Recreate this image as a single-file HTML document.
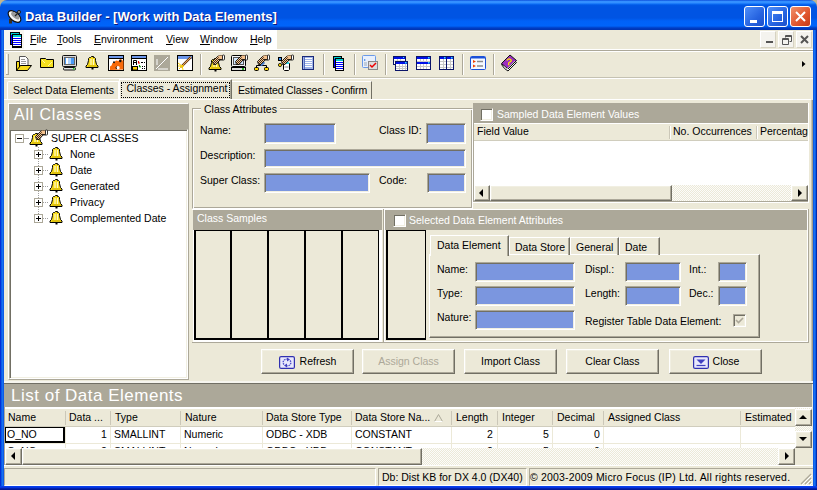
<!DOCTYPE html>
<html><head><meta charset="utf-8">
<style>
*{box-sizing:border-box;margin:0;padding:0}
html,body{width:817px;height:490px;overflow:hidden;background:#ece9d8}
body{position:relative;font-family:"Liberation Sans",sans-serif;font-size:11px;color:#000}
.a{position:absolute}
.t{position:absolute;white-space:nowrap;line-height:13px;font-size:10.5px}
.sunk{position:absolute;background:#7b96df;border:1px solid;border-color:#aca899 #fff #fff #aca899;box-shadow:inset 1px 1px #716f64,inset -1px -1px #f1efe2}
.btn{position:absolute;background:#ece9d8;border:1px solid;border-color:#fff #716f64 #716f64 #fff;box-shadow:inset -1px -1px #aca899,inset 1px 1px #f1efe2;text-align:center;line-height:22px;font-size:10.5px}
.hdr{position:absolute;background:#aca899;color:#fff}
.cb{position:absolute;width:13px;height:13px;background:#fff;border:1px solid;border-color:#aca899 #fff #fff #aca899;box-shadow:inset 1px 1px #716f64,inset -1px -1px #f1efe2}
.tab{position:absolute;border:1px solid;border-bottom:none;border-color:#fff #716f64 #716f64 #fff;box-shadow:inset -1px 0 #aca899;height:19px;line-height:17px;padding-left:5px;font-size:10.5px;white-space:nowrap}
.vl{position:absolute;width:1px;background:#aca899}
.hl{position:absolute;height:1px;background:#aca899}
.wl{position:absolute;background:#fff}
</style></head><body>

<!-- window frame -->
<div class="a" style="left:0;top:0;width:817px;height:490px;background:#0831d9"></div>
<div class="a" style="left:0;top:0;width:8px;height:8px;background:#c3b58e"></div><div class="a" style="left:809px;top:0;width:8px;height:8px;background:#c3b58e"></div>
<div class="a" style="left:0;top:0;width:817px;height:30px;border-radius:7px 7px 0 0;background:linear-gradient(#0a3fd0 0px,#2b8aff 1px,#3d95ff 2px,#2b8aff 3px,#0f6ff5 4px,#0058e6 5px,#0054e3 7px,#0054e3 18px,#0062f8 21px,#0064fa 26px,#0050dd 27px,#003dc4 28px,#0033b0 30px)"></div>
<div class="a" style="left:0;top:30px;width:4px;height:460px;background:linear-gradient(90deg,#0019cf 0px,#0a5ae8 1.5px,#1670f0 2.5px,#0a50e0 4px)"></div>
<div class="a" style="left:813px;top:30px;width:4px;height:460px;background:linear-gradient(90deg,#0a50e0 0px,#1670f0 1.5px,#0a5ae8 2.5px,#00138a 4px)"></div>
<div class="a" style="left:0;top:486px;width:817px;height:4px;background:linear-gradient(#0844f5 0px,#0636e0 1.5px,#0322b0 2.5px,#00138a 4px)"></div>

<!-- title -->
<svg class="a" style="left:6px;top:6px" width="17" height="19" viewBox="0 0 17 19">
 <path d="M3 13h3v4.5h-3z" fill="#3a3020"/>
 <ellipse cx="8.5" cy="10.5" rx="7.5" ry="4.2" transform="rotate(40 8.5 10.5)" fill="#f4f4f4" stroke="#111" stroke-width="1.2"/>
 <ellipse cx="9.3" cy="9.7" rx="5" ry="2.3" transform="rotate(40 9.3 9.7)" fill="#9a9a9a"/>
 <path d="M9 10L12.5 6.5" stroke="#222" stroke-width="1.3"/>
 <circle cx="13" cy="6" r="1.6" fill="#888" stroke="#111" stroke-width="0.8"/>
</svg>
<div class="t" style="left:25px;top:9px;color:#fff;font-weight:bold;font-size:13px;letter-spacing:0;line-height:15px;text-shadow:1px 1px #0a1883">Data Builder - [Work with Data Elements]</div>

<!-- caption buttons -->
<div class="a" style="left:744px;top:6px;width:21px;height:21px;border:1px solid #fff;border-radius:3px;background:linear-gradient(135deg,#4f8ff9,#2663e0 60%,#1b50cb)"><div class="a" style="left:5px;top:13px;width:7px;height:3px;background:#fff"></div></div>
<div class="a" style="left:767px;top:6px;width:21px;height:21px;border:1px solid #fff;border-radius:3px;background:linear-gradient(135deg,#4f8ff9,#2663e0 60%,#1b50cb)"><div class="a" style="left:4px;top:4px;width:11px;height:11px;border:1px solid #fff;border-top-width:3px"></div></div>
<div class="a" style="left:790px;top:6px;width:21px;height:21px;border:1px solid #fff;border-radius:3px;background:linear-gradient(135deg,#f0906a,#e0542c 60%,#c33a18)">
 <svg class="a" style="left:3px;top:3px" width="13" height="13"><path d="M2 2 L11 11 M11 2 L2 11" stroke="#fff" stroke-width="2"/></svg></div>

<!-- client area -->
<div class="a" style="left:4px;top:30px;width:809px;height:456px;background:#ece9d8"></div>

<!-- menu bar -->
<div class="a" style="left:4px;top:30px;width:273px;height:19px;background:#fff"></div>
<div class="a" style="left:4px;top:30px;width:20px;height:19px;background:#f7f6f0"></div>
<svg class="a" style="left:10px;top:32px" width="12" height="16" viewBox="0 0 12 16">
 <rect x="0.5" y="0.5" width="9" height="12" fill="#00f" stroke="#000"/>
 <rect x="1" y="1" width="8" height="2" fill="#0cc"/>
 <rect x="2.5" y="2.5" width="9" height="13" fill="#fff" stroke="#000"/>
 <rect x="3" y="3" width="8" height="2" fill="#0cc"/>
 <path d="M3 6.5h8M3 8.5h8M3 10.5h8M3 12.5h8" stroke="#00f"/>
 <rect x="2" y="14" width="10" height="2" fill="#000"/>
</svg>
<div class="t" style="left:30px;top:33px"><u>F</u>ile</div>
<div class="t" style="left:57px;top:33px"><u>T</u>ools</div>
<div class="t" style="left:94px;top:33px"><u>E</u>nvironment</div>
<div class="t" style="left:166px;top:33px"><u>V</u>iew</div>
<div class="t" style="left:200px;top:33px"><u>W</u>indow</div>
<div class="t" style="left:250px;top:33px"><u>H</u>elp</div>
<!-- mdi buttons -->
<div class="a" style="left:760px;top:31px;width:16px;height:17px;background:#f4f3ee;border:1px solid #fff;border-color:#fff #d6d2c2 #d6d2c2 #fff"><div class="a" style="left:5px;top:9px;width:7px;height:2px;background:#555"></div></div>
<div class="a" style="left:778px;top:31px;width:16px;height:17px;background:#f4f3ee;border:1px solid #fff;border-color:#fff #d6d2c2 #d6d2c2 #fff">
 <svg class="a" style="left:3px;top:3px" width="10" height="10"><path d="M3.5 0.5h6v6h-2M3.5 0.5v2M0.5 3.5h6v6h-6z M0.5 4.5h6M3.5 1.5h6" stroke="#555" fill="none"/></svg></div>
<div class="a" style="left:796px;top:31px;width:16px;height:17px;background:#f4f3ee;border:1px solid #fff;border-color:#fff #d6d2c2 #d6d2c2 #fff">
 <svg class="a" style="left:3px;top:3px" width="10" height="10"><path d="M1 1L8 8M8 1L1 8" stroke="#555" stroke-width="2"/></svg></div>
<div class="wl" style="left:4px;top:49px;width:809px;height:1px"></div>
<div class="hl" style="left:4px;top:50px;width:809px;background:#aca899"></div>
<div class="wl" style="left:4px;top:51px;width:809px;height:1px"></div>

<!-- toolbar -->
<div class="a" style="left:6px;top:54px;width:3px;height:21px;border-left:1px solid #fff;border-right:1px solid #aca899;background:#ece9d8"></div>
<div class="hl" style="left:4px;top:77px;width:809px;background:#c5c2b2"></div>
<div class="wl" style="left:4px;top:78px;width:809px;height:1px"></div>
<svg class="a" style="left:0;top:0" width="530" height="80" viewBox="0 0 530 80">
<defs>
 <symbol id="bell" viewBox="0 0 13 13" overflow="visible">
  <path d="M5.5 0.5h2v1h1l1 1v2l1 4 1.5 1.5v1.5h-12v-1.5l1.5-1.5 1-4v-2l1-1h1z" fill="#f8dc1c" stroke="#000" stroke-linejoin="round"/>
  <path d="M5 3v6M7.5 3v6" stroke="#fff9c8" stroke-width="1.2"/>
  <path d="M2 10h9" stroke="#c8a800"/>
  <rect x="5.5" y="12" width="2" height="1.5" fill="#000"/>
 </symbol>
 <pattern id="chk" width="2" height="2" patternUnits="userSpaceOnUse"><rect width="2" height="2" fill="#f6c38e"/><rect width="1" height="1" fill="#3a2a1a"/><rect x="1" y="1" width="1" height="1" fill="#3a2a1a"/></pattern>
 <symbol id="hand" viewBox="0 0 13 10" overflow="visible">
  <path d="M0.5 6.5l5-5 2-1h3.5v4.5h-3l-4 4.5h-2.5z" fill="url(#chk)" stroke="#000" stroke-width="0.8"/>
  <path d="M6 1l1.5-0.5h3.5v4h-3.5z" fill="#f6c38e"/>
  <path d="M7 4.5h3.5" stroke="#000" stroke-width="0.8"/>
  <rect x="10.5" y="0" width="2" height="5" rx="0.8" fill="#fff" stroke="#000" stroke-width="0.8"/>
 </symbol>
</defs>
<!-- grip -->
<rect x="6" y="54" width="1" height="21" fill="#fff"/><rect x="8" y="54" width="1" height="21" fill="#aca899"/><rect x="6" y="74" width="3" height="1" fill="#aca899"/>
<!-- 1 open folder -->
<path d="M19.5 56.5h6l2.5 2.5v6.5h-8.5z" fill="#fff" stroke="#555"/>
<path d="M21 59.5h4M21 61.5h5M21 63.5h5" stroke="#999"/>
<path d="M16.5 61.5h3v9h-3z" fill="#f8dc1c" stroke="#000"/>
<path d="M16.5 70.5l4-5h11l-4 5z" fill="#f8dc1c" stroke="#000"/>
<!-- 2 folder -->
<path d="M40.5 58.5h5l1 1h7v8h-13z" fill="#f5e01e" stroke="#000"/>
<path d="M42 60l3 3M48 66l4-4" stroke="#fff6a0"/>
<!-- 3 monitor -->
<rect x="62.5" y="55.5" width="14" height="11" rx="1" fill="#d8d8d8" stroke="#111"/>
<rect x="64.5" y="57.5" width="10" height="7" fill="#4a9af5" stroke="#666"/>
<rect x="66" y="58" width="2" height="6" fill="#fff"/><rect x="68" y="58" width="3" height="6" fill="#b0d4ff"/>
<rect x="63.5" y="67.5" width="12" height="2.5" rx="1" fill="#e0e0e0" stroke="#111"/>
<rect x="73" y="68" width="1.5" height="1.5" fill="#2c2"/>
<!-- 4 bell -->
<use href="#bell" x="86" y="56" width="13" height="13"/>
<!-- 5 puzzle window -->
<rect x="108.5" y="55.5" width="15" height="15" fill="#fff" stroke="#000"/>
<rect x="109" y="56" width="14" height="2" fill="#6f98ea"/><rect x="109" y="58" width="14" height="1" fill="#000"/>
<path d="M110 70v-3.5l1.5-1 1-2.5 2-1 1.5-1.5 2.5 0.5 1-1.5 1.5-0.5 1.5 1.5 1 0v9z" fill="#f86a08"/>
<circle cx="114" cy="62.3" r="1" fill="#111"/><circle cx="120.3" cy="61" r="1.2" fill="#111"/>
<circle cx="118" cy="67.8" r="1.7" fill="#fff"/><path d="M116.5 66.5a2 2 0 0 0 0 2.5" stroke="#111" fill="none"/>
<!-- 6 form window -->
<rect x="131.5" y="55.5" width="15" height="15" fill="#fff" stroke="#000"/>
<rect x="132" y="56" width="14" height="2" fill="#6f98ea"/><rect x="132" y="58" width="14" height="1" fill="#000"/>
<path d="M133.5 65V60.5h3V65M134 62.5h2" stroke="#000" fill="none"/>
<rect x="132.5" y="66.5" width="5" height="3.5" fill="#ffd000" stroke="#000"/>
<path d="M138.5 61v2h1.5" stroke="#e00000" stroke-width="1.1" fill="none"/><path d="M139.5 65v1.8h1.5" stroke="#00a000" stroke-width="1.1" fill="none"/>
<path d="M141 62.5h2M144 62.5h1M142 66.5h1M144 66.5h1M142 68.5h1M144 68.5h1" stroke="#000"/>
<!-- 7 disabled -->
<rect x="154" y="55" width="16" height="16" fill="#aca899"/>
<path d="M156 69l12-12M158 69h10M157 59v6" stroke="#fff" stroke-width="1"/>
<!-- 8 wand window -->
<rect x="177.5" y="55.5" width="15" height="15" fill="#fff" stroke="#000"/>
<rect x="178" y="56" width="14" height="3" fill="#6b95e8"/>
<path d="M181 67l10-10" stroke="#6a3a10" stroke-width="2.4"/><path d="M181 67l10-10" stroke="#e0a060" stroke-width="1"/>
<path d="M178 63l4 3M179 69l3-3M182 65l1 5M178 66h6" stroke="#ffd400" stroke-width="1"/>
<!-- sep -->
<rect x="200" y="54" width="1" height="21" fill="#aca899"/><rect x="201" y="54" width="1" height="21" fill="#fff"/>
<!-- 9 hand bell -->
<use href="#bell" x="209" y="58" width="13" height="13"/>
<use href="#hand" x="212" y="55" width="13" height="10"/>
<!-- 10 hand monitor -->
<rect x="231.5" y="55.5" width="14" height="11" rx="1" fill="#f4f4f4" stroke="#000"/>
<rect x="233.5" y="57.5" width="10" height="7" fill="#d4eaff" stroke="#555"/>
<rect x="231.5" y="67.5" width="14" height="3" fill="#ddd" stroke="#000"/><rect x="242" y="68" width="2" height="2" fill="#2a2"/>
<use href="#hand" x="235" y="55" width="13" height="10"/>
<!-- 11 hand hierarchy -->
<path d="M256.5 68v-2.5h10v2.5" stroke="#000" fill="none"/>
<path d="M261.5 65.5v-1" stroke="#000"/>
<rect x="254.5" y="67.5" width="4" height="3" rx="1" fill="#ffd800" stroke="#000"/>
<rect x="264.5" y="67.5" width="4" height="3" rx="1" fill="#ffd800" stroke="#000"/>
<path d="M258.5 63l3-3 3 3-3 3z" fill="#5aa8ff" stroke="#1a50c0" stroke-width="0.8"/>
<use href="#hand" x="257" y="55" width="13" height="10"/>
<!-- 12 hand db -->
<rect x="278.5" y="57.5" width="3" height="3" fill="#3a90f0" stroke="#000"/>
<circle cx="280" cy="65" r="1.6" fill="#ffd800" stroke="#000" stroke-width="0.8"/>
<path d="M283.5 63.5h6v6l-1 1h-4l-1-1z" fill="#fff" stroke="#000"/><rect x="284" y="62" width="5" height="2" fill="#30e0f0"/>
<path d="M284.5 67h4" stroke="#888"/>
<use href="#hand" x="281" y="55" width="13" height="10"/>
<!-- 13 list doc -->
<rect x="302.5" y="56.5" width="11" height="13" fill="#9fb4e8" stroke="#1a2a7a"/>
<path d="M304 58.5h8M304 60.5h8M304 62.5h8M304 64.5h8M304 66.5h8" stroke="#fff"/><path d="M304.5 57v12" stroke="#5a70c0"/>
<!-- sep -->
<rect x="323" y="54" width="1" height="21" fill="#aca899"/><rect x="324" y="54" width="1" height="21" fill="#fff"/>
<!-- 14 doc stack -->
<rect x="333.5" y="56.5" width="8" height="11" fill="#00f" stroke="#000"/><rect x="334" y="57" width="7" height="2" fill="#0cc"/>
<rect x="335.5" y="58.5" width="8" height="12" fill="#fff" stroke="#000"/><rect x="336" y="59" width="7" height="2" fill="#0cc"/>
<path d="M336 62.5h7M336 64.5h7M336 66.5h7M336 68.5h7" stroke="#00f"/>
<!-- sep -->
<rect x="354" y="54" width="1" height="21" fill="#aca899"/><rect x="355" y="54" width="1" height="21" fill="#fff"/>
<!-- 15 checklist -->
<rect x="362.5" y="55.5" width="13" height="12" rx="1" fill="#e8f0fc" stroke="#6a9ae8"/>
<path d="M364 59l2 1-2 1z" fill="#3a80e0"/><path d="M364 63h3M364 65h3" stroke="#9ab"/>
<rect x="368.5" y="61.5" width="9" height="8" fill="#ddd" stroke="#888"/>
<path d="M370 65l2 2 4-4" stroke="#e00" stroke-width="1.5" fill="none"/>
<!-- sep -->
<rect x="385" y="54" width="1" height="21" fill="#aca899"/><rect x="386" y="54" width="1" height="21" fill="#fff"/>
<!-- 16 table1 -->
<rect x="393.5" y="56.5" width="12" height="8" fill="#fff" stroke="#0a1468"/><rect x="394" y="57" width="11" height="2" fill="#0010e8"/><rect x="403" y="57" width="1" height="1" fill="#30e0ff"/>
<path d="M394 61h11M397.5 59v5M400.5 59v5" stroke="#c8c8c8"/>
<rect x="395.5" y="61.5" width="12" height="9" fill="#fff" stroke="#0a1468"/><rect x="396" y="62" width="11" height="2" fill="#0010e8"/><rect x="405" y="62" width="1.5" height="1.5" fill="#30e0ff"/>
<path d="M396 66.5h11M396 68.5h11M399.5 64v6M402.5 64v6M405.5 64v6" stroke="#c8c8c8"/>
<!-- 17 table2 -->
<rect x="416.5" y="56.5" width="14" height="13" fill="#fff" stroke="#0a1468"/>
<rect x="417" y="57" width="13" height="2" fill="#0010e8"/><rect x="417" y="62" width="13" height="2" fill="#0010e8"/>
<rect x="428" y="57" width="1.5" height="1.5" fill="#30e0ff"/><rect x="428" y="62" width="1.5" height="1.5" fill="#30e0ff"/>
<path d="M417 61.5h13M417 66.5h13M420.5 59v3M423.5 59v3M426.5 59v3M420.5 64v5M423.5 64v5M426.5 64v5" stroke="#c8c8c8"/>
<!-- 18 table3 -->
<rect x="439.5" y="56.5" width="14" height="13" fill="#fff" stroke="#0a1468"/>
<rect x="440" y="57" width="13" height="2" fill="#0010e8"/><path d="M446.5 57v12" stroke="#0a1468"/>
<rect x="444" y="57" width="1.5" height="1.5" fill="#30e0ff"/><rect x="451" y="57" width="1.5" height="1.5" fill="#30e0ff"/>
<path d="M440 61.5h6M447 61.5h6M440 64.5h6M447 64.5h6M440 67.5h6M447 67.5h6M443.5 59v10M450.5 59v10" stroke="#c8c8c8"/>
<!-- sep -->
<rect x="462" y="54" width="1" height="21" fill="#aca899"/><rect x="463" y="54" width="1" height="21" fill="#fff"/>
<!-- 19 list -->
<rect x="470.5" y="56.5" width="15" height="13" rx="1" fill="#f4f8ff" stroke="#1a50d8"/>
<rect x="471" y="57" width="14" height="1.5" fill="#1a50d8"/>
<path d="M473 60l3 1.5-3 1.5zM473 64.5l3 1.5-3 1.5z" fill="#f04000"/>
<path d="M477 61.5h6M477 66h6" stroke="#8a8a8a" stroke-width="1.4"/>
<!-- sep -->
<rect x="493" y="54" width="1" height="21" fill="#aca899"/><rect x="494" y="54" width="1" height="21" fill="#fff"/>
<!-- 20 book -->
<path d="M501.5 64.5l3 4 3.5 2.5 8.5-8.5-3.5-2.5z" fill="#fff" stroke="#111"/>
<path d="M501.5 63.5l8.5-8.5 6.5 5.5-8.5 8.5z" fill="#9a30c0" stroke="#111"/>
<path d="M504 66.5l3 2.5 8-8" stroke="#bbb" fill="none"/>
<path d="M507 60.5q1.5-2.5 3.5-1t-1.5 3l-0.5 1.5" stroke="#ffe000" stroke-width="1.3" fill="none"/>
<rect x="508" y="64" width="1.3" height="1.3" fill="#ffe000"/>
</svg>

<svg class="a" style="left:802px;top:61px" width="4" height="6"><path d="M0 0L3.5 3L0 6z" fill="#000"/></svg>

<!-- outer tabs -->
<div class="a" style="left:7px;top:81px;width:112px;height:19px;border:1px solid #fff;border-bottom:none;border-radius:2px 0 0 0"></div>
<div class="t" style="left:13px;top:83.5px">Select Data Elements</div>
<div class="a" style="left:232px;top:81px;width:140px;height:18px;border-top:1px solid #fff;border-right:1px solid #716f64"></div>
<div class="t" style="left:238px;top:83.5px;letter-spacing:-0.15px">Estimated Classes - Confirm</div>
<div class="a" style="left:119px;top:79px;width:113px;height:21px;background:#ece9d8;border:1px solid;border-bottom:none;border-color:#fff #716f64 #716f64 #fff;box-shadow:inset -1px 0 #aca899"></div>
<div class="a" style="left:121px;top:82px;width:109px;height:16px;border:1px dotted #000"></div>
<div class="t" style="left:126.5px;top:81.5px">Classes - Assignment</div>

<!-- tab page border -->
<div class="wl" style="left:4px;top:99px;width:807px;height:1px"></div>


<!-- All Classes -->
<div class="a" style="left:8px;top:103px;width:181px;height:277px;border:1px solid;border-color:#fff #aca899 #aca899 #fff"></div>
<div class="hdr" style="left:9px;top:104px;width:179px;height:25px"></div>
<div class="t" style="left:14px;top:105px;color:#fff;font-size:16px;line-height:20px;letter-spacing:0.8px">All Classes</div>
<div class="a" style="left:9px;top:129px;width:179px;height:250px;background:#fff;border:1px solid;border-color:#aca899 #fff #fff #aca899;box-shadow:inset 1px 1px #716f64,inset -1px -1px #f1efe2"></div>
<svg class="a" style="left:0;top:0" width="190" height="240" viewBox="0 0 190 240">
 <!-- dotted lines -->
 <g fill="#a0a0a0">
  <rect x="25" y="138" width="1" height="1"/><rect x="27" y="138" width="1" height="1"/>
 </g>
 <path d="M38.5 147V219" stroke="#a0a0a0" stroke-dasharray="1 1"/>
 <path d="M43 154.5h6M43 170.5h6M43 186.5h6M43 202.5h6M43 218.5h6" stroke="#a0a0a0" stroke-dasharray="1 1"/>
 <path d="M24 138.5h5" stroke="#a0a0a0" stroke-dasharray="1 1"/>
 <!-- root box -->
 <rect x="15.5" y="134.5" width="8" height="8" fill="#fff" stroke="#aca899"/>
 <path d="M17 138.5h5" stroke="#000"/>
 <use href="#bell" x="30" y="133" width="13" height="13"/>
 <use href="#hand" x="35" y="130" width="13" height="10"/>
 <g>
  <rect x="34.5" y="150.5" width="8" height="8" fill="#fff" stroke="#aca899"/><path d="M36 154.5h5M38.5 152v5" stroke="#000"/>
  <rect x="34.5" y="166.5" width="8" height="8" fill="#fff" stroke="#aca899"/><path d="M36 170.5h5M38.5 168v5" stroke="#000"/>
  <rect x="34.5" y="182.5" width="8" height="8" fill="#fff" stroke="#aca899"/><path d="M36 186.5h5M38.5 184v5" stroke="#000"/>
  <rect x="34.5" y="198.5" width="8" height="8" fill="#fff" stroke="#aca899"/><path d="M36 202.5h5M38.5 200v5" stroke="#000"/>
  <rect x="34.5" y="214.5" width="8" height="8" fill="#fff" stroke="#aca899"/><path d="M36 218.5h5M38.5 216v5" stroke="#000"/>
 </g>
 <use href="#bell" x="50" y="147" width="13" height="13"/>
 <use href="#bell" x="50" y="163" width="13" height="13"/>
 <use href="#bell" x="50" y="179" width="13" height="13"/>
 <use href="#bell" x="50" y="195" width="13" height="13"/>
 <use href="#bell" x="50" y="211" width="13" height="13"/>
</svg>
<div class="t" style="left:51px;top:132px">SUPER CLASSES</div>
<div class="t" style="left:70px;top:148px">None</div>
<div class="t" style="left:70px;top:164px">Date</div>
<div class="t" style="left:70px;top:180px">Generated</div>
<div class="t" style="left:70px;top:196px">Privacy</div>
<div class="t" style="left:70px;top:212px">Complemented Date</div>


<!-- Class Attributes group -->
<div class="a" style="left:192px;top:108px;width:281px;height:101px;border:1px solid;border-color:#aca899 #fff #fff #aca899;box-shadow:inset 1px 1px #fff,inset -1px -1px #aca899"></div>
<div class="t" style="left:201px;top:103px;background:#ece9d8;padding:0 3px">Class Attributes</div>
<div class="t" style="left:200px;top:124px">Name:</div>
<div class="sunk" style="left:264px;top:123px;width:72px;height:21px"></div>
<div class="t" style="left:379px;top:124px">Class ID:</div>
<div class="sunk" style="left:426px;top:123px;width:40px;height:21px"></div>
<div class="t" style="left:200px;top:149px">Description:</div>
<div class="sunk" style="left:264px;top:149px;width:202px;height:19px"></div>
<div class="t" style="left:200px;top:174px">Super Class:</div>
<div class="sunk" style="left:264px;top:173px;width:106px;height:20px"></div>
<div class="t" style="left:379px;top:174px">Code:</div>
<div class="sunk" style="left:427px;top:173px;width:39px;height:20px"></div>

<!-- Sampled Data Element Values -->
<div class="hdr" style="left:473px;top:103px;width:336px;height:20px"></div>
<div class="cb" style="left:480px;top:108px"></div>
<div class="t" style="left:497px;top:107.5px;color:#fff">Sampled Data Element Values</div>
<div class="a" style="left:473px;top:123px;width:336px;height:80px;background:#fff;border:1px solid;border-color:#aca899 #fff #fff #aca899"></div>
<div class="a" style="left:474px;top:123px;width:334px;height:18px;background:#ece9d8;border-bottom:1px solid #d0cdbd;border-top:1px solid #fff"></div>
<div class="vl" style="left:669px;top:126px;height:13px;background:#cbc7b8"></div><div class="wl" style="left:670px;top:126px;width:1px;height:13px"></div>
<div class="vl" style="left:756px;top:126px;height:13px;background:#cbc7b8"></div><div class="wl" style="left:757px;top:126px;width:1px;height:13px"></div>
<div class="t" style="left:477px;top:125px">Field Value</div>
<div class="t" style="left:673px;top:125px">No. Occurrences</div>
<div class="a" style="left:760px;top:124px;width:48px;height:16px;overflow:hidden"><div class="t" style="left:0;top:1px">Percentage</div></div>
<!-- h scrollbar -->
<div class="a" style="left:474px;top:185px;width:334px;height:17px;background:repeating-conic-gradient(#fcfcfa 0 25%,#ece9d8 0 50%) 0 0/2px 2px"></div>
<div class="btn" style="left:474px;top:185px;width:16px;height:16px"></div>
<svg class="a" style="left:479px;top:189px" width="4" height="8"><path d="M4 0L0 4L4 8z" fill="#000"/></svg>
<div class="btn" style="left:490px;top:185px;width:182px;height:16px"></div>
<div class="btn" style="left:791px;top:185px;width:17px;height:16px"></div>
<svg class="a" style="left:798px;top:189px" width="4" height="8"><path d="M0 0L4 4L0 8z" fill="#000"/></svg>
<div class="a" style="left:473px;top:201px;width:336px;height:1px;background:#aca899"></div>
<div class="wl" style="left:473px;top:202px;width:336px;height:1px"></div>
<div class="wl" style="left:808px;top:103px;width:1px;height:100px"></div>

<!-- panels row 2 -->
<div class="wl" style="left:192px;top:209px;width:617px;height:1px"></div>
<!-- Class Samples -->
<div class="hdr" style="left:193px;top:210px;width:189px;height:20px"></div>
<div class="t" style="left:197px;top:212px;color:#fff">Class Samples</div>
<div class="wl" style="left:193px;top:230px;width:189px;height:112px"></div>
<div class="a" style="left:194px;top:230px;width:37px;height:110px;border:1px solid #000;background:#ece9d8;border-width:1px 1px 2px 2px"></div>
<div class="a" style="left:231px;top:230px;width:37px;height:110px;border:1px solid #000;background:#ece9d8;border-width:1px 1px 2px 1px"></div>
<div class="a" style="left:268px;top:230px;width:37px;height:110px;border:1px solid #000;background:#ece9d8;border-width:1px 1px 2px 1px"></div>
<div class="a" style="left:305px;top:230px;width:37px;height:110px;border:1px solid #000;background:#ece9d8;border-width:1px 1px 2px 1px"></div>
<div class="a" style="left:342px;top:230px;width:37px;height:110px;border:1px solid #000;background:#ece9d8;border-width:1px 1px 2px 1px"></div>
<div class="hl" style="left:192px;top:342px;width:192px"></div>
<div class="vl" style="left:383px;top:209px;height:134px"></div>

<!-- Selected Data Element Attributes -->
<div class="hdr" style="left:385px;top:210px;width:422px;height:20px"></div>
<div class="cb" style="left:393px;top:214px"></div>
<div class="t" style="left:409px;top:214px;color:#fff">Selected Data Element Attributes</div>
<div class="wl" style="left:384px;top:209px;width:1px;height:133px"></div>
<div class="wl" style="left:807px;top:209px;width:1px;height:133px"></div>
<div class="a" style="left:386px;top:230px;width:40px;height:110px;border:1px solid #000;border-width:1px 1px 2px 2px;background:#ece9d8"></div>
<div class="wl" style="left:384px;top:341px;width:424px;height:1px"></div>
<div class="hl" style="left:384px;top:342px;width:425px"></div>
<div class="vl" style="left:808px;top:209px;height:134px"></div>
<!-- inner tab control -->
<div class="a" style="left:429px;top:254px;width:331px;height:84px;border:1px solid;border-color:#fff #716f64 #716f64 #fff;box-shadow:inset -1px -1px #aca899"></div>
<div class="tab" style="left:509px;top:237px;width:61px;height:18px;line-height:19px">Data Store</div>
<div class="tab" style="left:570px;top:237px;width:49px;height:18px;line-height:19px">General</div>
<div class="tab" style="left:619px;top:237px;width:41px;height:18px;line-height:19px">Date</div>
<div class="tab" style="left:430px;top:235px;width:79px;height:21px;background:#ece9d8;line-height:19px;padding-left:6px">Data Element</div>
<div class="t" style="left:437px;top:263px">Name:</div>
<div class="sunk" style="left:475px;top:262px;width:100px;height:20px"></div>
<div class="t" style="left:437px;top:287px">Type:</div>
<div class="sunk" style="left:475px;top:286px;width:100px;height:20px"></div>
<div class="t" style="left:437px;top:311px">Nature:</div>
<div class="sunk" style="left:475px;top:310px;width:100px;height:20px"></div>
<div class="t" style="left:585px;top:263px">Displ.:</div>
<div class="sunk" style="left:625px;top:262px;width:56px;height:20px"></div>
<div class="t" style="left:585px;top:287px">Length:</div>
<div class="sunk" style="left:625px;top:286px;width:56px;height:20px"></div>
<div class="t" style="left:689px;top:263px">Int.:</div>
<div class="sunk" style="left:718px;top:262px;width:29px;height:20px"></div>
<div class="t" style="left:689px;top:287px">Dec.:</div>
<div class="sunk" style="left:718px;top:286px;width:29px;height:20px"></div>
<div class="t" style="left:585px;top:315px">Register Table Data Element:</div>
<div class="cb" style="left:733px;top:314px;background:#ece9d8"></div>
<svg class="a" style="left:735px;top:316px" width="9" height="9"><path d="M1 4l2.5 2.5L8 2" stroke="#aca899" stroke-width="1.6" fill="none"/></svg>
<div class="vl" style="left:811px;top:100px;height:283px;background:#c5c2b2"></div><div class="vl" style="left:812px;top:100px;height:283px;background:#9d9a8a"></div>


<!-- buttons -->
<div class="btn" style="left:261px;top:349px;width:93px;height:25px;line-height:23px"><span style="padding-left:21px">Refresh</span></div>
<svg class="a" style="left:279px;top:356px" width="16" height="13"><rect x="0.6" y="0.6" width="14.8" height="11.8" rx="1.5" fill="#e8e8fc" stroke="#3030b0" stroke-width="1.2"/><path d="M5 8.5A3.2 3.2 0 0 1 8 3.2M11 4.5A3.2 3.2 0 0 1 8 9.8" stroke="#4848c8" stroke-width="1.3" stroke-dasharray="1.6 0.8" fill="none"/><path d="M8 1.5l3 2-3 2zM8 7.5l-3 2 3 2z" fill="#4040c0"/></svg>
<div class="btn" style="left:362px;top:349px;width:93px;height:25px;line-height:23px;color:#aca899">Assign Class</div>
<div class="btn" style="left:464px;top:349px;width:93px;height:25px;line-height:23px">Import Class</div>
<div class="btn" style="left:566px;top:349px;width:93px;height:25px;line-height:23px">Clear Class</div>
<div class="btn" style="left:669px;top:349px;width:93px;height:25px;line-height:23px"><span style="padding-left:21px">Close</span></div>
<svg class="a" style="left:693px;top:356px" width="16" height="13"><rect x="0.6" y="0.6" width="14.8" height="11.8" rx="1.5" fill="#e8e8fc" stroke="#3030b0" stroke-width="1.2"/><path d="M3.5 3.5h9l-4.5 4.5z" fill="#4040c0"/><path d="M3.5 9.5h9" stroke="#4040c0" stroke-width="1.2"/></svg>

<!-- tab page bottom -->
<div class="a" style="left:4px;top:381px;width:809px;height:2px;background:#f6f5ee"></div><div class="hl" style="left:4px;top:383px;width:809px;background:#716f64"></div>

<!-- List of Data Elements -->
<div class="hdr" style="left:4px;top:384px;width:808px;height:23px"></div>
<div class="t" style="left:11px;top:385px;color:#fff;font-size:17px;line-height:21px;letter-spacing:0.5px">List of Data Elements</div>
<div class="a" style="left:4px;top:407px;width:808px;height:59px;background:#fff;border-top:1px solid #fff"></div>
<div class="a" style="left:4px;top:408px;width:791px;height:19px;background:#ece9d8;border-bottom:1px solid #d0cdbd;border-top:1px solid #fff"></div>
<div class="a" style="left:4px;top:407px;width:1px;height:59px;background:#aca899"></div>
<div class="a" style="left:5px;top:409px;width:790px;height:17px;overflow:hidden">
<div class="t" style="left:3px;top:2px">Name</div>
<div class="t" style="left:64px;top:2px">Data ...</div>
<div class="t" style="left:110px;top:2px">Type</div>
<div class="t" style="left:180px;top:2px">Nature</div>
<div class="t" style="left:261px;top:2px">Data Store Type</div>
<div class="t" style="left:350px;top:2px">Data Store Na...</div>
<svg class="a" style="left:429px;top:5px" width="9" height="8"><path d="M0.5 7.5L4.5 0.5L8.5 7.5" stroke="#aca899" fill="none"/><path d="M0.5 7.5H8.5" stroke="#fff"/></svg>
<div class="t" style="left:451px;top:2px">Length</div>
<div class="t" style="left:497px;top:2px">Integer</div>
<div class="t" style="left:552px;top:2px">Decimal</div>
<div class="t" style="left:603px;top:2px">Assigned Class</div>
<div class="t" style="left:740px;top:2px">Estimated</div>
</div>
<svg class="a" style="left:0;top:405px" width="800" height="45">
<g fill="#cbc7b8">
<rect x="65" y="6" width="1" height="14"/><rect x="110" y="6" width="1" height="14"/><rect x="180" y="6" width="1" height="14"/>
<rect x="262" y="6" width="1" height="14"/><rect x="351" y="6" width="1" height="14"/><rect x="451" y="6" width="1" height="14"/>
<rect x="497" y="6" width="1" height="14"/><rect x="552" y="6" width="1" height="14"/><rect x="603" y="6" width="1" height="14"/>
<rect x="740" y="6" width="1" height="14"/>
</g>
<g fill="#ece9d8">
<rect x="65" y="22" width="1" height="21"/><rect x="110" y="22" width="1" height="21"/><rect x="180" y="22" width="1" height="21"/>
<rect x="262" y="22" width="1" height="21"/><rect x="351" y="22" width="1" height="21"/><rect x="451" y="22" width="1" height="21"/>
<rect x="497" y="22" width="1" height="21"/><rect x="552" y="22" width="1" height="21"/><rect x="603" y="22" width="1" height="21"/>
<rect x="740" y="22" width="1" height="21"/>
<rect x="5" y="38" width="790" height="1"/>
</g>
</svg>
<div class="a" style="left:5px;top:427px;width:60px;height:16px;border:2px solid #000;border-width:1px 2px 2px 1px"></div>
<div class="a" style="left:5px;top:427px;width:790px;height:21px;overflow:hidden">
<div class="t" style="left:2px;top:1px">O_NO</div>
<div class="t" style="left:96px;top:1px">1</div>
<div class="t" style="left:109px;top:1px">SMALLINT</div>
<div class="t" style="left:179px;top:1px">Numeric</div>
<div class="t" style="left:261px;top:1px">ODBC - XDB</div>
<div class="t" style="left:350px;top:1px">CONSTANT</div>
<div class="t" style="left:482px;top:1px">2</div>
<div class="t" style="left:538px;top:1px">5</div>
<div class="t" style="left:589px;top:1px">0</div>
<div class="t" style="left:2px;top:18px">O_NO</div>
<div class="t" style="left:96px;top:18px">2</div>
<div class="t" style="left:109px;top:18px">SMALLINT</div>
<div class="t" style="left:179px;top:18px">Numeric</div>
<div class="t" style="left:261px;top:18px">ODBC - XDB</div>
<div class="t" style="left:350px;top:18px">CONSTANT</div>
<div class="t" style="left:482px;top:18px">2</div>
<div class="t" style="left:538px;top:18px">5</div>
<div class="t" style="left:589px;top:18px">0</div>
</div>

<div class="a" style="left:795px;top:408px;width:17px;height:40px;background:repeating-conic-gradient(#fcfcfa 0 25%,#ece9d8 0 50%) 0 0/2px 2px"></div>
<div class="btn" style="left:795px;top:409px;width:17px;height:17px"></div>
<svg class="a" style="left:799px;top:415px" width="8" height="4"><path d="M0 4L4 0L8 4z" fill="#000"/></svg>
<div class="btn" style="left:795px;top:431px;width:17px;height:17px"></div>
<svg class="a" style="left:799px;top:437px" width="8" height="4"><path d="M0 0L4 4L8 0z" fill="#000"/></svg>
<div class="a" style="left:5px;top:448px;width:790px;height:17px;background:repeating-conic-gradient(#fcfcfa 0 25%,#ece9d8 0 50%) 0 0/2px 2px"></div>
<div class="btn" style="left:5px;top:448px;width:17px;height:17px"></div>
<svg class="a" style="left:11px;top:452px" width="4" height="8"><path d="M4 0L0 4L4 8z" fill="#000"/></svg>
<div class="btn" style="left:22px;top:448px;width:400px;height:17px"></div>
<div class="btn" style="left:778px;top:448px;width:17px;height:17px"></div>
<svg class="a" style="left:785px;top:452px" width="4" height="8"><path d="M0 0L4 4L0 8z" fill="#000"/></svg>
<div class="a" style="left:795px;top:448px;width:17px;height:17px;background:#ece9d8"></div>


<!-- status bar -->

<div class="wl" style="left:4px;top:465px;width:809px;height:1px"></div>
<div class="a" style="left:4px;top:468px;width:372px;height:18px;border:1px solid;border-color:#aca899 #fff #fff #aca899"></div>
<div class="a" style="left:378px;top:468px;width:149px;height:18px;border:1px solid;border-color:#aca899 #fff #fff #aca899"></div>
<div class="a" style="left:529px;top:468px;width:284px;height:18px;border:1px solid;border-right:none;border-color:#aca899 #fff #fff #aca899"></div>
<div class="t" style="left:382px;top:471px">Db: Dist KB for DX 4.0 (DX40)</div>
<div class="t" style="left:530px;top:471px;letter-spacing:0.18px">© 2003-2009 Micro Focus (IP) Ltd. All rights reserved.</div>
<svg class="a" style="left:800px;top:473px" width="12" height="12"><path d="M11 1L1 11M11 5L5 11M11 9L9 11" stroke="#aca899" stroke-width="1.2"/><path d="M12 2L2 12M12 6L6 12M12 10L10 12" stroke="#fff" stroke-width="1"/></svg>


</body></html>
